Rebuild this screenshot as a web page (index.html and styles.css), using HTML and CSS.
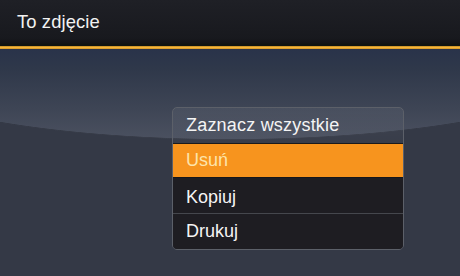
FILE: index.html
```html
<!DOCTYPE html>
<html lang="pl">
<head>
<meta charset="utf-8">
<title>To zdjęcie</title>
<link rel="stylesheet" href="styles.css">
</head>
<body>
<header class="topbar">
  <h1 class="title">To zdjęcie</h1>
</header>
<div class="rule"></div>
<main class="stage">
  <ul class="menu">
    <li class="item item-first">Zaznacz wszystkie</li>
    <li class="item item-active">Usuń</li>
    <li class="item item-dark item-copy">Kopiuj</li>
    <li class="item item-dark item-last">Drukuj</li>
  </ul>
</main>
</body>
</html>
```
FILE: styles.css
```css
html, body {
  margin: 0;
  padding: 0;
}
body {
  width: 460px;
  height: 276px;
  overflow: hidden;
  font-family: "Liberation Sans", Arial, sans-serif;
  background: #323744;
}
.topbar {
  height: 46px;
  box-sizing: border-box;
  background: linear-gradient(#1f2026 0, #18191e 38px, #131417 43px, #0f1310 44px, #0f1310 46px);
  padding-left: 17px;
}
.title {
  margin: 0;
  font-weight: normal;
  font-size: 18.4px;
  line-height: 44px;
  color: #f2f2f2;
  letter-spacing: 0.1px;
}
.rule {
  height: 3px;
  background: linear-gradient(#c08a22, #f6b53b 50%, #d09526);
}
.stage {
  height: 227px;
  box-sizing: border-box;
  padding: 58px 0 0 172px;
  background:
    radial-gradient(ellipse 395px 91px at 50% 0, transparent 98.6%, rgba(20,22,28,0.35) 99.3%, transparent 100%),
    radial-gradient(ellipse 395px 91px at 50% 0, transparent 99.3%, #343946 100%),
    linear-gradient(#29334a 0, #2f384a 20px, #3e4555 60px, #4b5160 91px);
  background-color: #323744;
}
.menu {
  list-style: none;
  margin: 0;
  padding: 0;
  width: 232px;
  box-sizing: border-box;
  border: 1px solid #5c6069;
  border-radius: 5px;
  overflow: hidden;
}
.item {
  font-size: 18px;
  color: #f4f4f4;
  padding-left: 13px;
  box-sizing: border-box;
}
.item-first {
  height: 35px;
  line-height: 35px;
  background: linear-gradient(rgba(255,255,255,0.06), rgba(255,255,255,0.02));
  letter-spacing: 0.2px;
}
.item-active {
  height: 34px;
  line-height: 33px;
  border-top: 1px solid #1a1a1c;
  background: #f7941e;
  color: #fde4ab;
}
.item-dark {
  background: #1e1d22;
}
.item-copy {
  height: 37px;
  padding-top: 2px;
  line-height: 34px;
  border-top: 1px solid #16161a;
  border-bottom: 1px solid #45474d;
}
.item-last {
  height: 35px;
  line-height: 35px;
}
```
